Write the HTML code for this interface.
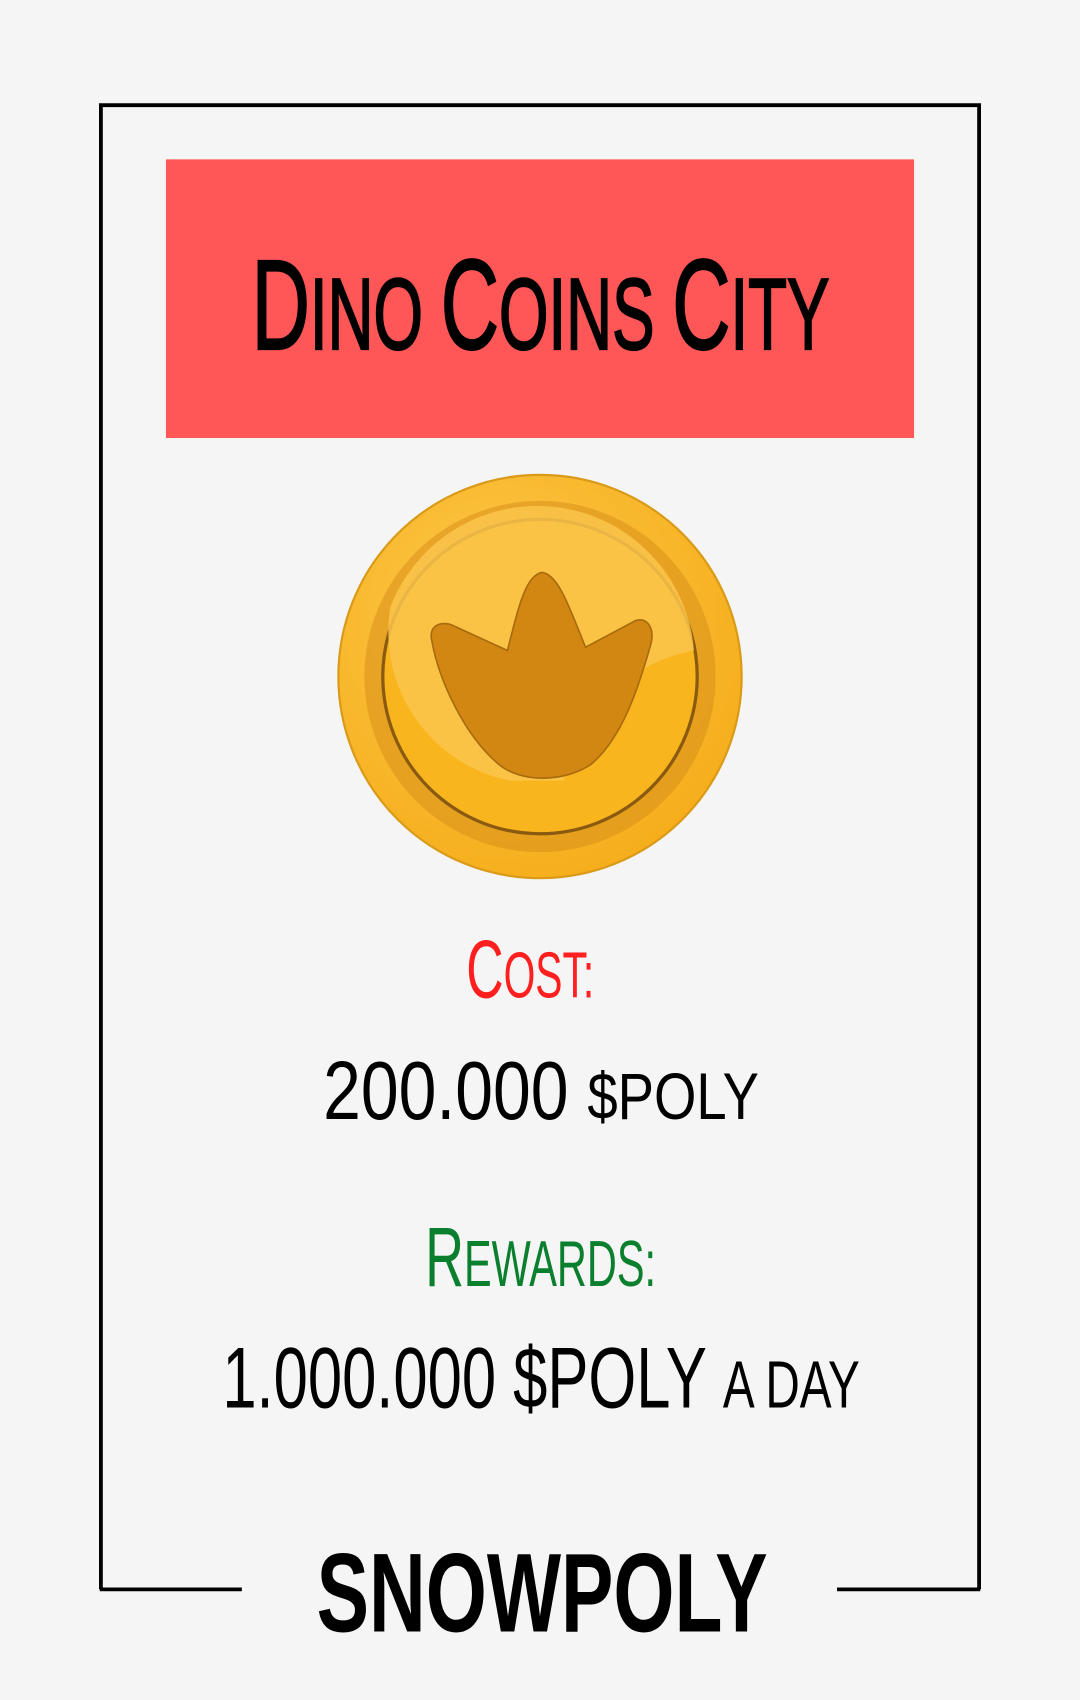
<!DOCTYPE html>
<html><head><meta charset="utf-8"><style>
html,body{margin:0;padding:0;background:#f5f5f5;}
svg{display:block}
text{font-family:"Liberation Sans Narrow","Liberation Sans",sans-serif;}
</style></head><body>
<svg width="1080" height="1700" viewBox="0 0 996 1568" xmlns="http://www.w3.org/2000/svg">
<defs>
<radialGradient id="g1" cx="0.4" cy="0.35" r="0.7">
<stop offset="0" stop-color="#fcc84a"/><stop offset="1" stop-color="#f6ad1a"/></radialGradient>
</defs>
<rect width="996" height="1568" fill="#f5f5f5"/>
<path d="M93 1466 V97 H903 V1466" fill="none" stroke="#000" stroke-width="3.5"/>
<line x1="92" y1="1466" x2="223" y2="1466" stroke="#000" stroke-width="3.5"/>
<line x1="772" y1="1466" x2="904" y2="1466" stroke="#000" stroke-width="3.5"/>
<rect x="153" y="147" width="690" height="257" fill="#ff5757"/>
<text x="232" y="322" textLength="533" lengthAdjust="spacingAndGlyphs" fill="#000" stroke="#000" stroke-width="2"><tspan font-size="118">D</tspan><tspan font-size="93">INO </tspan><tspan font-size="118">C</tspan><tspan font-size="93">OINS </tspan><tspan font-size="118">C</tspan><tspan font-size="93">ITY</tspan></text>
<circle cx="498" cy="624" r="186" fill="url(#g1)" stroke="#d99a18" stroke-width="2"/>
<circle cx="498" cy="624" r="162" fill="#d8901a" opacity="0.55"/>
<circle cx="498" cy="624" r="145" fill="#f9b51e" stroke="#8a5a10" stroke-width="3"/>
<path d="M360 560 A145 145 0 0 1 640 600 A150 150 0 0 0 520 720 L470 720 A140 140 0 0 1 360 560Z" fill="#fcc64c" opacity="0.85"/>
<path d="M398 590 C395 575 410 572 420 578 L468 600 C478 560 485 530 500 528 C515 530 525 560 540 597 L585 573 C595 568 605 578 600 595 C590 630 575 680 545 705 C520 722 480 722 460 705 C430 680 405 630 398 590Z" fill="#d28712" stroke="#a86a0e" stroke-width="1.5"/>
<text x="430" y="920" textLength="118" lengthAdjust="spacingAndGlyphs" fill="#ff1f1f"><tspan font-size="76">C</tspan><tspan font-size="60">OST:</tspan></text>
<text x="298" y="1032" textLength="402" lengthAdjust="spacingAndGlyphs" fill="#000"><tspan font-size="76">200.000 </tspan><tspan font-size="61">$POLY</tspan></text>
<text x="392" y="1186" textLength="213" lengthAdjust="spacingAndGlyphs" fill="#0a7f2e"><tspan font-size="78">R</tspan><tspan font-size="60">EWARDS:</tspan></text>
<text x="205" y="1298" textLength="588" lengthAdjust="spacingAndGlyphs" fill="#000"><tspan font-size="80">1.000.000 $POLY </tspan><tspan font-size="62">A DAY</tspan></text>
<text x="292" y="1505" textLength="416" lengthAdjust="spacingAndGlyphs" fill="#000" font-weight="bold" font-size="104">SNOWPOLY</text>
</svg>
</body></html>
